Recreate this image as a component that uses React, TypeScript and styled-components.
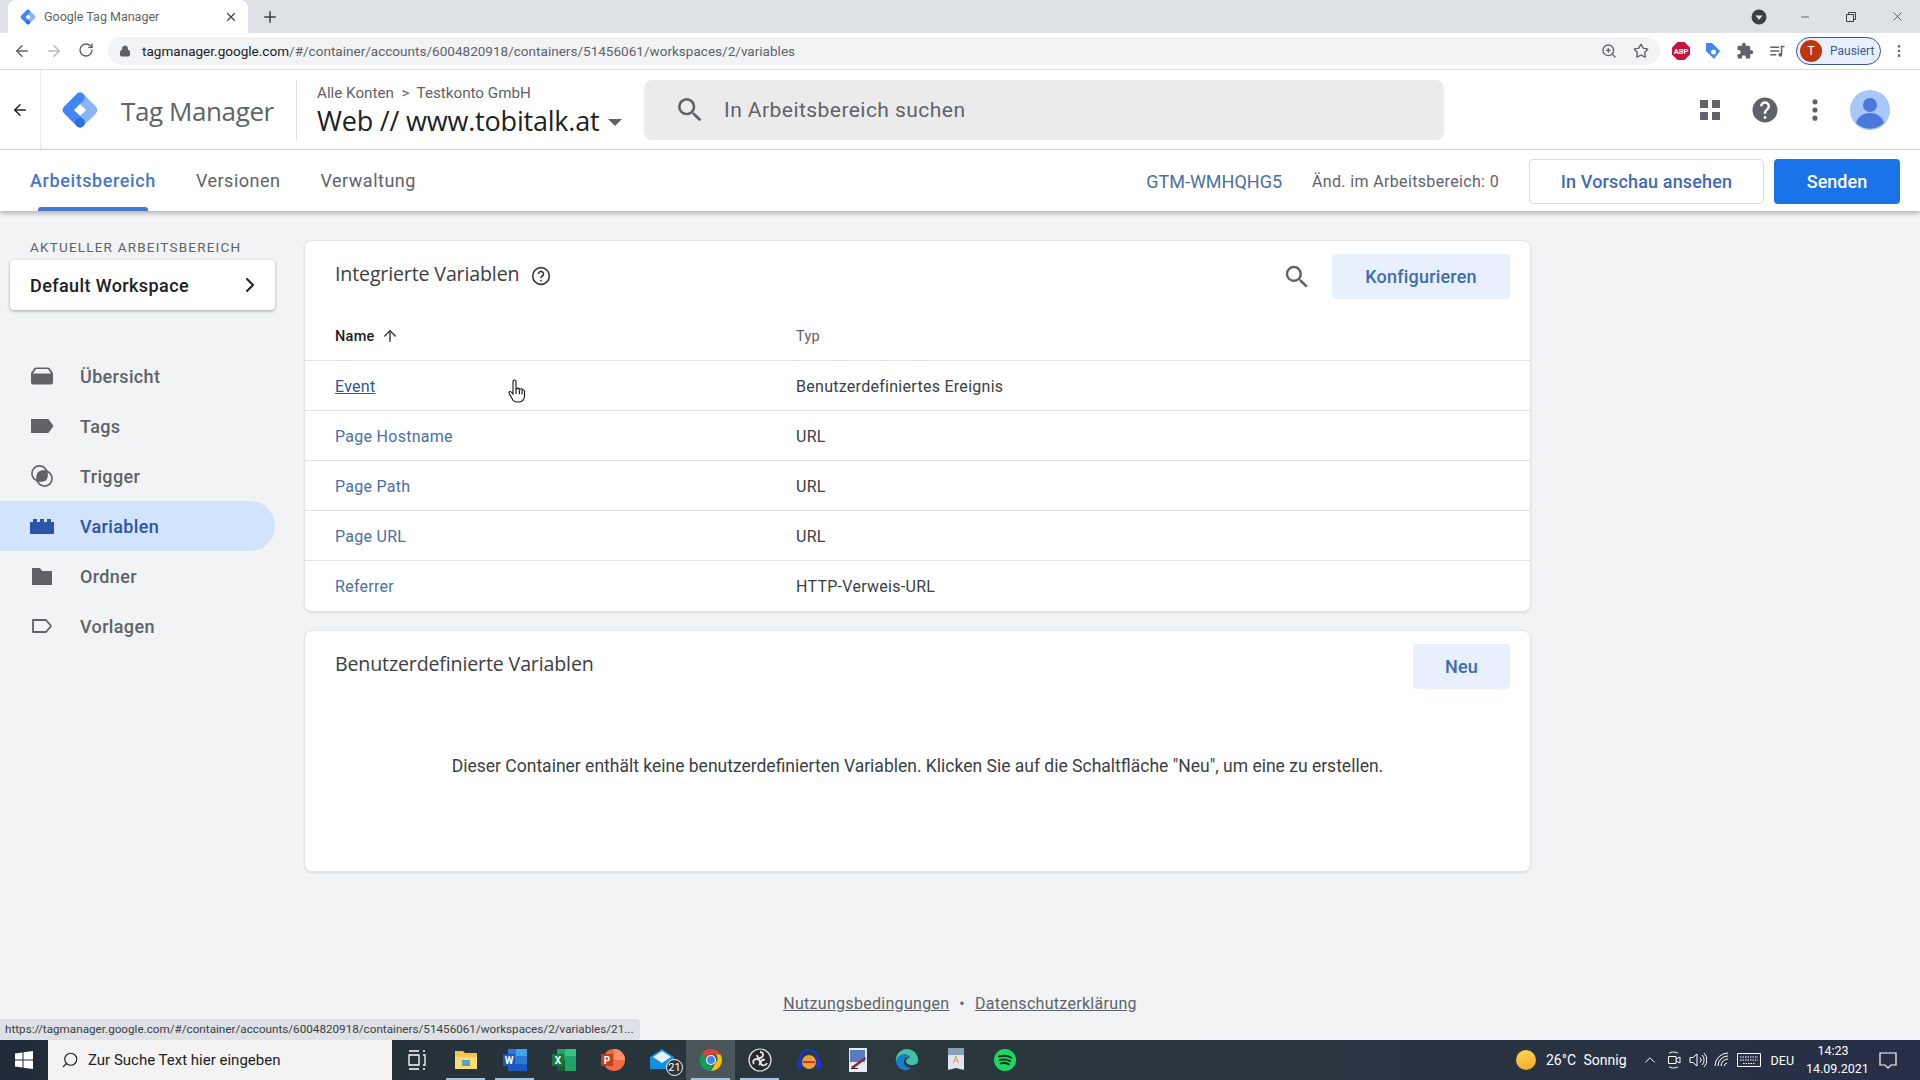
import { FC, ReactNode } from 'react'
import styled, { createGlobalStyle } from 'styled-components'
import { ArrowLeft, ArrowRight, ArrowUp, RotateCw, Search, Star, ZoomIn, Lock, Plus, X, Minus, ChevronRight, MoreVertical, ChevronUp } from 'lucide-react'

const GlobalStyle = createGlobalStyle`
    html, body {
        margin: 0;
        padding: 0;
        background: #f1f3f4;
    }
    body {
        font-family: Roboto, "Liberation Sans", sans-serif;
        color: #3c4043;
    }
    * {
        box-sizing: border-box;
    }
`

const Page = styled.div`
    position: relative;
    width: 1920px;
    height: 1080px;
    display: flex;
    flex-direction: column;
    overflow: hidden;
    background: #f1f3f4;
`

/* browser chrome */

const TabStrip = styled.div`
    height: 33px;
    flex: none;
    display: flex;
    align-items: flex-end;
    padding-left: 8px;
    background: #dee1e6;
`

const BrowserTab = styled.div`
    width: 240px;
    height: 33px;
    display: flex;
    align-items: center;
    padding: 0 10px 0 12px;
    background: #fff;
    border-radius: 8px 8px 0 0;
    font-size: 12.5px;
    color: #5f6368;
`

const TabTitle = styled.span`
    margin-left: 8px;
    flex: 1;
`

const NewTab = styled.div`
    width: 44px;
    height: 33px;
    display: flex;
    align-items: center;
    justify-content: center;
    color: #3c4043;
`

const WindowControls = styled.div`
    margin-left: auto;
    height: 33px;
    display: flex;
    align-items: center;
    color: #3c4043;
`

const WindowButton = styled.div<{ $w: number }>`
    width: ${p => p.$w}px;
    display: flex;
    justify-content: center;
`

const Toolbar = styled.div`
    height: 37px;
    flex: none;
    display: flex;
    align-items: center;
    background: #fff;
    border-bottom: 1px solid #dadce0;
    color: #5f6368;
`

const NavButton = styled.div<{ $faded?: boolean }>`
    width: 32px;
    display: flex;
    justify-content: center;
    color: ${p => (p.$faded ? '#b4b7bb' : '#5f6368')};
`

const NavButtons = styled.div`
    width: 108px;
    padding-left: 6px;
    display: flex;
    flex: none;
`

const MoreButton = styled(NavButton)`
    margin-left: 2px;
`

const Omnibox = styled.div`
    width: 1552px;
    height: 28px;
    flex: none;
    display: flex;
    align-items: center;
    padding: 0 11px;
    background: #f1f3f4;
    border-radius: 14px;
`

const UrlHost = styled.span`
    margin-left: 11px;
    font-size: 13.55px;
    color: #202124;
`

const UrlPath = styled.span`
    font-size: 13.55px;
    color: #5f6368;
`

const OmniIcons = styled.div`
    margin-left: auto;
    display: flex;
    gap: 16px;
    align-items: center;
`

const Extensions = styled.div`
    display: flex;
    align-items: center;
    gap: 14px;
    padding-left: 12px;
`

const ProfilePill = styled.div`
    width: 85px;
    height: 28px;
    margin-left: -4px;
    display: flex;
    align-items: center;
    gap: 8px;
    padding-left: 3px;
    background: #e8f0fe;
    border: 1px solid #3c5a8c;
    border-radius: 14px;
    font-size: 12px;
    color: #3c5a8c;
`

const ProfileDot = styled.div`
    width: 22px;
    height: 22px;
    display: flex;
    align-items: center;
    justify-content: center;
    border-radius: 50%;
    background: #bf360c;
    color: #fff;
    font-size: 12px;
`

/* GTM header */

const Header = styled.header`
    height: 80px;
    flex: none;
    display: flex;
    align-items: center;
    background: #fff;
    border-bottom: 1px solid #e0e0e0;
`

const BackCell = styled.div`
    width: 41px;
    height: 100%;
    display: flex;
    align-items: center;
    justify-content: center;
    border-right: 1px solid #e8eaed;
    color: #202124;
`

const Brand = styled.div`
    width: 256px;
    height: 60px;
    display: flex;
    align-items: center;
    padding-left: 20px;
    border-right: 1px solid #e0e0e0;
`

const BrandName = styled.span`
    margin: 2px 0 0 22px;
    font-family: "Open Sans", sans-serif;
    font-size: 26px;
    color: #5f6368;
    letter-spacing: -0.4px;
`

const Breadcrumbs = styled.div`
    width: 347px;
    padding: 3px 0 0 20px;
`

const Crumb = styled.div`
    font-size: 15.2px;
    color: #5f6368;
    line-height: 18px;
`

const ContainerName = styled.div`
    display: flex;
    align-items: center;
    margin-top: 1px;
    font-family: "Open Sans", sans-serif;
    font-size: 27px;
    line-height: 36px;
    color: #202124;
    letter-spacing: -0.2px;
`

const Caret = styled.span`
    width: 0;
    height: 0;
    margin: 4px 0 0 9px;
    border-left: 7px solid transparent;
    border-right: 7px solid transparent;
    border-top: 7px solid #5f6368;
`

const SearchBox = styled.div`
    width: 800px;
    height: 60px;
    flex: none;
    display: flex;
    align-items: center;
    gap: 18px;
    padding: 1px 0 0 30px;
    background: #ebebeb;
    border-radius: 8px;
    color: #5f6368;
    font-size: 21px;
    letter-spacing: 0.45px;
`

const HeaderIcons = styled.div`
    margin-left: auto;
    display: flex;
    align-items: center;
    padding-right: 18px;
    color: #5f6368;
`

const HeaderIcon = styled.div<{ $w: number }>`
    width: ${p => p.$w}px;
    display: flex;
    justify-content: center;
`

const TabsBar = styled.nav`
    position: relative;
    z-index: 2;
    height: 61px;
    flex: none;
    display: flex;
    align-items: center;
    background: #fff;
    box-shadow: 0 2px 5px rgba(60, 64, 67, 0.4);
`

const TabLink = styled.div<{ $active?: boolean }>`
    position: relative;
    height: 100%;
    display: flex;
    align-items: center;
    margin-right: 40px;
    font-size: 18px;
    letter-spacing: ${p => (p.$active ? 0.6 : 0.5)}px;
    font-weight: ${p => (p.$active ? 500 : 400)};
    color: ${p => (p.$active ? '#4a77c9' : '#5f6368')};

    &:first-child {
        margin-left: 30px;
    }

    ${p => p.$active && `
        &::after {
            content: '';
            position: absolute;
            left: 8px;
            right: 8px;
            bottom: 0;
            height: 4px;
            border-radius: 3px 3px 0 0;
            background: #4a77d4;
        }
    `}
`

const TabActions = styled.div`
    margin-left: auto;
    display: flex;
    align-items: center;
    padding: 2px 20px 0 0;
`

const ContainerId = styled.span`
    font-size: 18px;
    color: #4a6fa5;
    margin-right: 30px;
`

const Changes = styled.span`
    font-size: 16px;
    letter-spacing: 0.35px;
    color: #5f6368;
    margin-right: 30px;
`

const OutlineButton = styled.div`
    width: 235px;
    height: 45px;
    display: flex;
    align-items: center;
    justify-content: center;
    border: 1px solid #dadce0;
    border-radius: 4px;
    font-size: 18px;
    font-weight: 500;
    letter-spacing: 0.15px;
    color: #3f6cb0;
`

const PrimaryButton = styled.div`
    width: 126px;
    height: 45px;
    margin-left: 10px;
    display: flex;
    align-items: center;
    justify-content: center;
    border-radius: 4px;
    background: #1a73e8;
    font-size: 18px;
    font-weight: 500;
    color: #fff;
`

/* body */

const Body = styled.div`
    flex: 1;
    min-height: 0;
    display: flex;
`

const Sidebar = styled.aside`
    width: 304px;
    flex: none;
    padding-top: 28px;
`

const SidebarLabel = styled.div`
    padding-left: 30px;
    font-size: 13.5px;
    line-height: 16px;
    letter-spacing: 1.2px;
    color: #5f6368;
`

const WorkspaceCard = styled.div`
    width: 265px;
    height: 50px;
    margin: 5px 0 41px 10px;
    display: flex;
    align-items: center;
    justify-content: space-between;
    padding: 0 13px 0 20px;
    background: #fff;
    border-radius: 4px;
    box-shadow: 0 1px 3px rgba(60, 64, 67, 0.45);
    font-size: 18px;
    font-weight: 500;
    letter-spacing: 0.4px;
    color: #202124;
`

const NavItem = styled.div<{ $active?: boolean }>`
    width: 275px;
    height: 50px;
    display: flex;
    align-items: center;
    padding-left: 30px;
    border-radius: 0 25px 25px 0;
    background: ${p => (p.$active ? '#d2e3fc' : 'transparent')};
    color: ${p => (p.$active ? '#2a55a8' : '#5f6368')};
    font-size: 18px;
    font-weight: 500;
    letter-spacing: 0.35px;
`

const NavIcon = styled.div`
    width: 50px;
    display: flex;
    flex: none;
`

const Main = styled.main`
    flex: 1;
    display: flex;
    flex-direction: column;
    padding-top: 29px;
`

const Card = styled.section`
    width: 1227px;
    background: #fff;
    border: 1px solid #e3e5e8;
    border-radius: 8px;
    box-shadow: 0 1px 2px rgba(60, 64, 67, 0.12);
`

const CardHead = styled.div<{ $h: number }>`
    height: ${p => p.$h}px;
    display: flex;
    align-items: flex-start;
    padding: 13px 20px 0 30px;
`

const CardTitle = styled.h2`
    margin: 2px 0 0;
    font-family: "Open Sans", sans-serif;
    font-size: 19.6px;
    font-weight: 400;
    line-height: 36px;
    letter-spacing: -0.15px;
    color: #3c4043;
`

const HelpIcon = styled.div`
    display: flex;
    margin: 12px 0 0 12px;
    color: #3c4043;
`

const CardActions = styled.div`
    margin-left: auto;
    display: flex;
    align-items: center;
    gap: 20px;
    color: #5f6368;
`

const TintButton = styled.div<{ $w: number }>`
    width: ${p => p.$w}px;
    height: 45px;
    display: flex;
    align-items: center;
    justify-content: center;
    border-radius: 4px;
    background: #e8f0fe;
    font-size: 18px;
    font-weight: 500;
    letter-spacing: 0.2px;
    color: #3f6cb0;
`

const Row = styled.div<{ $head?: boolean }>`
    height: ${p => (p.$head ? 46 : 50)}px;
    display: grid;
    grid-template-columns: 461px 1fr;
    align-items: center;
    padding: ${p => (p.$head ? '0 0 3px 30px' : '1px 0 0 30px')};
    font-size: 16px;
    letter-spacing: 0.28px;
    border-bottom: 1px solid #e0e0e0;

    &:last-child {
        border-bottom: 0;
    }
`

const NameHead = styled.div`
    display: flex;
    align-items: center;
    gap: 6px;
    font-size: 14.5px;
    font-weight: 500;
    color: #202124;
`

const TypeHead = styled.div`
    font-size: 14.5px;
    color: #5f6368;
`

const VarLink = styled.a<{ $hover?: boolean }>`
    color: ${p => (p.$hover ? '#2f5597' : '#4a6fa5')};
    text-decoration: ${p => (p.$hover ? 'underline' : 'none')};
`

const VarType = styled.span`
    color: #3c4043;
`

const EmptyText = styled.p`
    margin: 49px 0 0;
    text-align: center;
    font-size: 17.5px;
    line-height: 24px;
    color: #3c4043;
`

const SecondCard = styled(Card)`
    height: 242px;
    margin-top: 18px;
`

const Footer = styled.footer`
    margin-top: auto;
    padding: 0 304px 27px 0;
    display: flex;
    justify-content: center;
    gap: 10px;
    font-size: 16px;
    letter-spacing: 0.3px;
    color: #5f6368;
`

const FootLink = styled.a`
    text-decoration: underline;
`

/* things lying over the page */

const StatusBubble = styled.div`
    position: absolute;
    left: 0;
    bottom: 40px;
    width: 640px;
    height: 21px;
    padding: 0 0 0 5px;
    background: #dee1e6;
    border-radius: 0 4px 0 0;
    font-size: 11.7px;
    line-height: 21px;
    color: #3c4043;
    white-space: nowrap;
`

const Cursor = styled.svg`
    position: absolute;
    left: 508px;
    top: 379px;
`

/* taskbar */

const Taskbar = styled.div`
    height: 40px;
    flex: none;
    display: flex;
    align-items: center;
    background: linear-gradient(90deg, #1f2c37, #2b383c 45%, #2a3540 70%, #262f47);
    color: #fff;
`

const StartButton = styled.div`
    width: 48px;
    display: flex;
    justify-content: center;
`

const TaskSearch = styled.div`
    width: 344px;
    height: 40px;
    display: flex;
    align-items: center;
    gap: 9px;
    padding-left: 13px;
    background: #f3f3f3;
    font-size: 15px;
    color: #222;
`

const TaskGlass = styled(Search)`
    transform: scaleX(-1);
`

const TaskViewCell = styled.div`
    width: 49px;
    display: flex;
    justify-content: center;
`

const TaskApp = styled.div<{ $open?: boolean; $active?: boolean }>`
    position: relative;
    width: 49px;
    height: 40px;
    display: flex;
    align-items: center;
    justify-content: center;
    background: ${p => (p.$active ? '#4a5659' : 'transparent')};

    ${p => p.$open && `
        &::after {
            content: '';
            position: absolute;
            left: 5px;
            right: 5px;
            bottom: 0;
            height: 2px;
            background: #a6c4dc;
        }
    `}
`

const MailBadge = styled.span`
    position: absolute;
    right: 3px;
    bottom: 4px;
    width: 17px;
    height: 17px;
    display: flex;
    align-items: center;
    justify-content: center;
    border: 1px solid #fff;
    border-radius: 50%;
    background: #28343a;
    font-size: 11px;
`

const Tray = styled.div`
    margin-left: auto;
    display: flex;
    align-items: center;
    height: 40px;
    font-size: 14px;
`

const Sun = styled.div`
    width: 20px;
    height: 20px;
    margin-right: 10px;
    border-radius: 50%;
    background: linear-gradient(160deg, #ffd75a, #f5a623);
`

const Weather = styled.span`
    font-size: 14px;
    word-spacing: 4px;
    margin-right: 11px;
`

const TrayIcon = styled.div<{ $w: number }>`
    width: ${p => p.$w}px;
    display: flex;
    justify-content: center;
`

const Lang = styled.span`
    font-size: 12.5px;
    margin: 0 12px 0 8px;
`

const Clock = styled.div`
    width: 54px;
    font-size: 12.5px;
    line-height: 18px;
    text-align: center;
    white-space: nowrap;
`

const NotifyCell = styled.div`
    width: 60px;
    padding-right: 4px;
    display: flex;
    justify-content: center;
`

/* drawings */

const GtmLogo: FC<{ size: number }> = ({ size }) => (
    <svg width={size} height={size} viewBox="0 0 36 36" fill="none" strokeWidth="9" strokeLinejoin="round" strokeLinecap="round">
        <path d="M18 6 30 18 18 30" stroke="#8ab4f8" />
        <path d="M18 6 6 18 18 30" stroke="#4285f4" />
        <circle cx="18" cy="30" r="4.500" fill="#2a6fdb" stroke="none" />
    </svg>
)

const Icon: FC<{ children: ReactNode; size?: number; color?: string }> = ({ children, size = 24, color = 'currentColor' }) => (
    <svg width={size} height={size} viewBox="0 0 24 24" fill={color}>{children}</svg>
)

// the material search glass, lucide's one is too thin here
const MaterialSearch: FC<{ size: number }> = ({ size }) => (
    <Icon size={size}>
        <path d="M15.500 14h-.790l-.280-.270A6.470 6.470 0 0 0 16 9.500 6.500 6.500 0 1 0 9.500 16c1.610 0 3.090-.590 4.230-1.570l.270.280v.790l5 4.990L20.490 19l-4.990-5zm-6 0C7.010 14 5 11.990 5 9.500S7.010 5 9.500 5 14 7.010 14 9.500 11.990 14 9.500 14z" />
    </Icon>
)

const navItems: { label: string; active?: boolean; icon: ReactNode }[] = [
    {
        label: 'Übersicht',
        icon: (
            <Icon>
                <path d="M6 3.500h12a2 2 0 0 1 1.600.8L23 9v9.500a2 2 0 0 1-2 2H3a2 2 0 0 1-2-2V9l3.400-4.700A2 2 0 0 1 6 3.500Z" />
                <path d="M6 5h12l3 4.500H3Z" fill="#f1f3f4" />
            </Icon>
        )
    },
    {
        label: 'Tags',
        icon: <Icon><path d="M1 5h17a1 1 0 0 1 .8.4L23.500 12l-4.700 6.600a1 1 0 0 1-.8.400H1Z" /></Icon>
    },
    {
        label: 'Trigger',
        icon: (
            <Icon>
                <circle cx="9.500" cy="9.500" r="7.600" fill="none" stroke="currentColor" strokeWidth="1.600" />
                <circle cx="14.500" cy="14.500" r="7.600" fill="none" stroke="currentColor" strokeWidth="1.600" />
                <path d="M8 8a7.600 7.600 0 0 1 9 1 7.600 7.600 0 0 1-1 7.500 7.600 7.600 0 0 1-8.500-1A7.600 7.600 0 0 1 8 8Z" />
            </Icon>
        )
    },
    {
        label: 'Variablen',
        active: true,
        icon: <Icon><path d="M0 8h3V5h4v3h3V5h4v3h3V5h4v3h3v12H0Z" /></Icon>
    },
    {
        label: 'Ordner',
        icon: <Icon><path d="M2 4h8l2 3h10v14H2Z" /></Icon>
    },
    {
        label: 'Vorlagen',
        icon: <Icon><path d="M3 6h13l5 6-5 6H3Z" fill="none" stroke="currentColor" strokeWidth="1.800" strokeLinejoin="round" /></Icon>
    }
]

const variables = [
    { name: 'Event', type: 'Benutzerdefiniertes Ereignis', hover: true },
    { name: 'Page Hostname', type: 'URL' },
    { name: 'Page Path', type: 'URL' },
    { name: 'Page URL', type: 'URL' },
    { name: 'Referrer', type: 'HTTP-Verweis-URL' }
]

const App: FC = () => (
    <Page>
        <GlobalStyle />

        <TabStrip>
            <BrowserTab>
                <GtmLogo size={16} />
                <TabTitle>Google Tag Manager</TabTitle>
                <X size={14} color="#3c4043" />
            </BrowserTab>
            <NewTab><Plus size={18} /></NewTab>
            <WindowControls>
                <WindowButton $w={46}>
                    <svg width="16" height="16" viewBox="0 0 16 16">
                        <circle cx="8" cy="8" r="7.500" fill="#3c4043" />
                        <path d="M4.500 6.500h7L8 11Z" fill="#dee1e6" />
                    </svg>
                </WindowButton>
                <WindowButton $w={46}><Minus size={12} strokeWidth={1.5} /></WindowButton>
                <WindowButton $w={46}>
                    <svg width="12" height="12" viewBox="0 0 12 12" fill="none" stroke="#3c4043">
                        <path d="M1.500 3.500h7v7h-7ZM3.500 3.500v-2h7v7h-2" />
                    </svg>
                </WindowButton>
                <WindowButton $w={46}><X size={15} strokeWidth={1.3} /></WindowButton>
            </WindowControls>
        </TabStrip>

        <Toolbar>
            <NavButtons>
                <NavButton><ArrowLeft size={18} /></NavButton>
                <NavButton $faded><ArrowRight size={18} /></NavButton>
                <NavButton><RotateCw size={16} /></NavButton>
            </NavButtons>
            <Omnibox>
                <Lock size={12} fill="#5f6368" />
                <UrlHost>tagmanager.google.com</UrlHost>
                <UrlPath>/#/container/accounts/6004820918/containers/51456061/workspaces/2/variables</UrlPath>
                <OmniIcons>
                    <ZoomIn size={16} />
                    <Star size={16} />
                </OmniIcons>
            </Omnibox>
            <Extensions>
                <svg width="18" height="18" viewBox="0 0 18 18">
                    <path d="M5.500 0h7L18 5.500v7L12.500 18h-7L0 12.500v-7Z" fill="#c8143f" />
                    <text x="9" y="12" fontSize="7.500" fontWeight="700" fontFamily="Roboto" textAnchor="middle" fill="#fff">ABP</text>
                </svg>
                <svg width="18" height="18" viewBox="0 0 18 18">
                    <path d="M2 1h6l8 8-6 8-8-8Z" fill="#4285f4" />
                    <circle cx="9.500" cy="10" r="2.500" fill="#fff" />
                </svg>
                <Icon size={18}>
                    <path d="M20.500 11H19V7a2 2 0 0 0-2-2h-4V3.500a2.500 2.500 0 0 0-5 0V5H4a2 2 0 0 0-2 2v3.800h1.500a2.700 2.700 0 0 1 0 5.400H2V20a2 2 0 0 0 2 2h3.800v-1.500a2.700 2.700 0 0 1 5.400 0V22H17a2 2 0 0 0 2-2v-4h1.500a2.500 2.500 0 0 0 0-5Z" />
                </Icon>
                <Icon size={18}>
                    <path d="M3 6h12v2H3Zm0 5h12v2H3Zm0 5h8v2H3Z" />
                    <path d="M17 5h5v2h-3v10a2.500 2.500 0 1 1-2-2.400Z" />
                </Icon>
                <ProfilePill>
                    <ProfileDot>T</ProfileDot>
                    Pausiert
                </ProfilePill>
            </Extensions>
            <MoreButton><MoreVertical size={16} /></MoreButton>
        </Toolbar>

        <Header>
            <BackCell><ArrowLeft size={18} /></BackCell>
            <Brand>
                <GtmLogo size={38} />
                <BrandName>Tag Manager</BrandName>
            </Brand>
            <Breadcrumbs>
                <Crumb>Alle Konten &nbsp;&gt;&nbsp; Testkonto GmbH</Crumb>
                <ContainerName>Web // www.tobitalk.at<Caret /></ContainerName>
            </Breadcrumbs>
            <SearchBox>
                <MaterialSearch size={32} />
                In Arbeitsbereich suchen
            </SearchBox>
            <HeaderIcons>
                <HeaderIcon $w={55}>
                    <Icon size={24}><path d="M2 2h8v8H2Zm12 0h8v8h-8ZM2 14h8v8H2Zm12 0h8v8h-8Z" /></Icon>
                </HeaderIcon>
                <HeaderIcon $w={55}>
                    <Icon size={30}>
                        <path d="M12 2a10 10 0 1 0 0 20 10 10 0 0 0 0-20Zm1 17h-2v-2h2Zm2.100-7.700-.9.900c-.7.700-1.200 1.300-1.200 2.800h-2v-.5c0-1.100.5-2.100 1.200-2.800l1.200-1.300c.4-.3.600-.800.600-1.400a2 2 0 0 0-4 0H8a4 4 0 0 1 8 0c0 .9-.4 1.700-.9 2.300Z" />
                    </Icon>
                </HeaderIcon>
                <HeaderIcon $w={45}>
                    <Icon size={28}><circle cx="12" cy="5" r="2.200" /><circle cx="12" cy="12" r="2.200" /><circle cx="12" cy="19" r="2.200" /></Icon>
                </HeaderIcon>
                <HeaderIcon $w={65}>
                    <svg width="40" height="40" viewBox="0 0 40 40">
                        <circle cx="20" cy="20" r="20" fill="#a8c7fa" />
                        <circle cx="20" cy="15" r="7" fill="#4a78dc" />
                        <path d="M6 33c2-7 8-10 14-10s12 3 14 10a20 20 0 0 1-28 0Z" fill="#4a78dc" />
                    </svg>
                </HeaderIcon>
            </HeaderIcons>
        </Header>

        <TabsBar>
            <TabLink $active>Arbeitsbereich</TabLink>
            <TabLink>Versionen</TabLink>
            <TabLink>Verwaltung</TabLink>
            <TabActions>
                <ContainerId>GTM-WMHQHG5</ContainerId>
                <Changes>Änd. im Arbeitsbereich: 0</Changes>
                <OutlineButton>In Vorschau ansehen</OutlineButton>
                <PrimaryButton>Senden</PrimaryButton>
            </TabActions>
        </TabsBar>

        <Body>
            <Sidebar>
                <SidebarLabel>AKTUELLER ARBEITSBEREICH</SidebarLabel>
                <WorkspaceCard>
                    Default Workspace
                    <ChevronRight size={24} color="#202124" />
                </WorkspaceCard>
                {navItems.map(item => (
                    <NavItem key={item.label} $active={item.active}>
                        <NavIcon>{item.icon}</NavIcon>
                        {item.label}
                    </NavItem>
                ))}
            </Sidebar>

            <Main>
                <Card>
                    <CardHead $h={74}>
                        <CardTitle>Integrierte Variablen</CardTitle>
                        <HelpIcon>
                            <svg width="20" height="20" viewBox="0 0 24 24" fill="none" stroke="currentColor" strokeWidth="2">
                                <circle cx="12" cy="12" r="10" />
                                <path d="M9 9.500a3 3 0 1 1 4.500 2.600c-1 .6-1.500 1.100-1.500 2.400M12 16.500v2" />
                            </svg>
                        </HelpIcon>
                        <CardActions>
                            <MaterialSearch size={30} />
                            <TintButton $w={178}>Konfigurieren</TintButton>
                        </CardActions>
                    </CardHead>
                    <Row $head>
                        <NameHead>Name <ArrowUp size={18} color="#3c4043" /></NameHead>
                        <TypeHead>Typ</TypeHead>
                    </Row>
                    {variables.map(v => (
                        <Row key={v.name}>
                            <div><VarLink $hover={v.hover}>{v.name}</VarLink></div>
                            <VarType>{v.type}</VarType>
                        </Row>
                    ))}
                </Card>

                <SecondCard>
                    <CardHead $h={74}>
                        <CardTitle>Benutzerdefinierte Variablen</CardTitle>
                        <CardActions>
                            <TintButton $w={97}>Neu</TintButton>
                        </CardActions>
                    </CardHead>
                    <EmptyText>Dieser Container enthält keine benutzerdefinierten Variablen. Klicken Sie auf die Schaltfläche "Neu", um eine zu erstellen.</EmptyText>
                </SecondCard>

                <Footer>
                    <FootLink>Nutzungsbedingungen</FootLink>
                    <span>•</span>
                    <FootLink>Datenschutzerklärung</FootLink>
                </Footer>
            </Main>
        </Body>

        <Taskbar>
            <StartButton>
                <svg width="18" height="18" viewBox="0 0 18 18" fill="#fff">
                    <path d="M0 2.500 7.500 1.400V8.500H0ZM8.500 1.300 18 0V8.500H8.500ZM0 9.500H7.500V16.600L0 15.500ZM8.500 9.500H18V18L8.500 16.700Z" />
                </svg>
            </StartButton>
            <TaskSearch>
                <TaskGlass size={18} strokeWidth={1.5} />
                Zur Suche Text hier eingeben
            </TaskSearch>
            <TaskViewCell>
                <svg width="18" height="20" viewBox="0 0 18 20" fill="none" stroke="#fff" strokeWidth="1.300">
                    <path d="M1 1h10M1 19h10M1 5h10v10H1ZM15 1h2M15 5h2v10h-2M15 19h2" />
                </svg>
            </TaskViewCell>
            <TaskApp $open>
                <svg width="24" height="22" viewBox="0 0 24 22">
                    <path d="M1 2h8l2 2h12v16H1Z" fill="#f3c64f" />
                    <path d="M1 8h22v12H1Z" fill="#fbdc74" />
                    <path d="M8 11h8v6H8Z" fill="#5a9fc9" />
                </svg>
            </TaskApp>
            <TaskApp $open>
                <svg width="26" height="24" viewBox="0 0 26 24">
                    <path d="M6 1h19v22H6Z" fill="#2b7cd3" />
                    <path d="M14 1h11v7H14Z" fill="#41a5ee" />
                    <path d="M6 16h19v7H6Z" fill="#185abd" />
                    <path d="M1 6h12v12H1Z" fill="#185abd" />
                    <text x="7" y="15.500" fontSize="10" fontWeight="700" fontFamily="Roboto" textAnchor="middle" fill="#fff">W</text>
                </svg>
            </TaskApp>
            <TaskApp>
                <svg width="26" height="24" viewBox="0 0 26 24">
                    <path d="M6 1h19v22H6Z" fill="#21a366" />
                    <path d="M14 1h11v7H14Z" fill="#33c481" />
                    <path d="M6 12h8v11H6Z" fill="#185c37" />
                    <path d="M1 6h12v12H1Z" fill="#107c41" />
                    <text x="7" y="15.500" fontSize="10" fontWeight="700" fontFamily="Roboto" textAnchor="middle" fill="#fff">X</text>
                </svg>
            </TaskApp>
            <TaskApp>
                <svg width="26" height="24" viewBox="0 0 26 24">
                    <circle cx="14" cy="12" r="11" fill="#ed6c47" />
                    <path d="M14 1a11 11 0 0 1 11 11H14Z" fill="#ff8f6b" />
                    <path d="M1 6h12v12H1Z" fill="#c43e1c" />
                    <text x="7" y="15.500" fontSize="10" fontWeight="700" fontFamily="Roboto" textAnchor="middle" fill="#fff">P</text>
                </svg>
            </TaskApp>
            <TaskApp>
                <svg width="26" height="24" viewBox="0 0 26 24">
                    <path d="M1 9 13 1l12 8v12H1Z" fill="#1490df" />
                    <path d="M4 9 13 3l9 6-9 6Z" fill="#e6f3fb" />
                </svg>
                <MailBadge>21</MailBadge>
            </TaskApp>
            <TaskApp $open $active>
                <svg width="24" height="24" viewBox="0 0 24 24">
                    <path d="M12 1a11 11 0 0 1 9.500 5.500H12a5.500 5.500 0 0 0-5.200 3.700L3.200 5A11 11 0 0 1 12 1Z" fill="#db4437" />
                    <path d="M21.500 6.500A11 11 0 0 1 12 23l4.700-8.200a5.500 5.500 0 0 0 0-8.300Z" fill="#f4c20d" />
                    <path d="M12 23A11 11 0 0 1 3.200 5l4.600 8a5.500 5.500 0 0 0 6 3.200Z" fill="#0f9d58" />
                    <circle cx="12" cy="12" r="4.500" fill="#4285f4" stroke="#fff" strokeWidth="1.200" />
                </svg>
            </TaskApp>
            <TaskApp $open>
                <svg width="24" height="24" viewBox="0 0 24 24">
                    <circle cx="12" cy="12" r="11" fill="#2a2a2e" stroke="#e6e6e6" strokeWidth="1.200" />
                    <path d="M12 4c3 0 4 3 2 5s-5 1-5-2M19 15c-1 3-5 3-6 1s1-5 4-4M6 16c-2-3 0-5 3-5s4 4 2 6" fill="none" stroke="#e6e6e6" strokeWidth="1.800" />
                </svg>
            </TaskApp>
            <TaskApp>
                <svg width="26" height="24" viewBox="0 0 26 24">
                    <path d="M4 15V11a9 9 0 0 1 18 0v4" fill="none" stroke="#1f33c9" strokeWidth="2.500" />
                    <rect x="1" y="12" width="5" height="9" rx="2" fill="#1f33c9" />
                    <rect x="20" y="12" width="5" height="9" rx="2" fill="#1f33c9" />
                    <circle cx="13" cy="14" r="7" fill="#e9a23b" />
                    <path d="M7 13h12v2H7Z" fill="#d9342b" />
                </svg>
            </TaskApp>
            <TaskApp>
                <svg width="20" height="24" viewBox="0 0 20 24">
                    <path d="M1 0h18v24H1Z" fill="#e8ebf2" />
                    <path d="M2 2h15v12H2Z" fill="#5c7ac0" />
                    <path d="M3 19 17 9l1 2L5 21Z" fill="#8b2a3b" />
                    <path d="M3 20h7v1H3Z" fill="#222" />
                </svg>
            </TaskApp>
            <TaskApp>
                <svg width="24" height="24" viewBox="0 0 24 24">
                    <path d="M12 1a11 11 0 0 1 11 12c0 3-3 4-6 4-4 0-6-2-6-4s2-3 4-3c-1-3-4-4-7-3-3 1-6 4-7 7a11 11 0 0 1 11-13Z" fill="#45c1a6" />
                    <path d="M1 13c1-4 5-7 8-7 3 0 5 2 5 4-3-1-5 1-5 4s3 6 7 6c-2 2-5 3-7 2-5-1-8-5-8-9Z" fill="#1a7cc9" />
                </svg>
            </TaskApp>
            <TaskApp>
                <svg width="18" height="24" viewBox="0 0 18 24">
                    <path d="M1 0h16v22l-8-2-8 2Z" fill="#dfe5ea" />
                    <path d="M1 0h16v7H1Z" fill="#8aa0b4" />
                    <text x="9" y="15" fontSize="9" fontFamily="Roboto" textAnchor="middle" fill="#d9883b">A</text>
                </svg>
            </TaskApp>
            <TaskApp>
                <svg width="24" height="24" viewBox="0 0 24 24">
                    <circle cx="12" cy="12" r="11" fill="#1ed760" />
                    <path d="M6 8.500c4-1 9-.8 12.500 1.200M6.800 12c3.400-.8 7.500-.6 10.400 1.100M7.600 15.400c2.800-.6 6-.4 8.400.9" fill="none" stroke="#14301e" strokeWidth="1.900" strokeLinecap="round" />
                </svg>
            </TaskApp>
            <Tray>
                <Sun />
                <Weather>26°C Sonnig</Weather>
                <TrayIcon $w={24}><ChevronUp size={18} strokeWidth={1.3} /></TrayIcon>
                <TrayIcon $w={24}>
                    <svg width="14" height="18" viewBox="0 0 14 18" fill="none" stroke="#fff">
                        <path d="M2 2.500c2-2 7-2 9 0M2 15.500c2 2 7 2 9 0M1.500 5.500h7.500v7H1.500ZM9 8l4-2v6l-4-2" />
                    </svg>
                </TrayIcon>
                <TrayIcon $w={24}>
                    <svg width="18" height="16" viewBox="0 0 18 16" fill="none" stroke="#fff">
                        <path d="M1 5.500h3l4-3.500v12l-4-3.500H1ZM11 5.500a3.500 3.500 0 0 1 0 5M13 3a7 7 0 0 1 0 10M15 1a10 10 0 0 1 0 14" />
                    </svg>
                </TrayIcon>
                <TrayIcon $w={25}>
                    <svg width="16" height="16" viewBox="0 0 16 16" fill="none" stroke="#fff">
                        <path d="M1 14A13 13 0 0 1 14 1M4 14A10 10 0 0 1 14 4M7 14a7 7 0 0 1 7-7M10 14a4 4 0 0 1 3-3" />
                    </svg>
                </TrayIcon>
                <TrayIcon $w={28}>
                    <svg width="24" height="14" viewBox="0 0 24 14" fill="none" stroke="#fff">
                        <path d="M.5.500h23v13H.5Z" />
                        <path d="M3 4h18M3 7h18M6 10.500h12" strokeDasharray="1.500 1" />
                    </svg>
                </TrayIcon>
                <Lang>DEU</Lang>
                <Clock>14:23<br />14.09.2021</Clock>
                <NotifyCell>
                    <svg width="18" height="18" viewBox="0 0 18 18" fill="none" stroke="#fff" strokeWidth="1.200">
                        <path d="M1 2h16v12h-5l-3 3-3-3H1Z" />
                    </svg>
                </NotifyCell>
            </Tray>
        </Taskbar>

        <StatusBubble>https://tagmanager.google.com/#/container/accounts/6004820918/containers/51456061/workspaces/2/variables/21...</StatusBubble>

        <Cursor width="18" height="24" viewBox="0 0 18 24" fill="#fff" stroke="#111" strokeWidth="1.100">
            <path d="M5 2.500a1.500 1.500 0 0 1 3 0V10l1-.3a1.400 1.400 0 0 1 2.400.3l1 .2a1.400 1.400 0 0 1 2.300.6c1.200 0 1.800.7 1.800 1.800V17c0 3-2 6-5.500 6H9c-2.500 0-4-1.500-5-3.500L1.200 14.500c-.8-1.500 1.100-2.600 2-1.500L5 15Z" />
            <path d="M8 10v5M11.300 10.300v5M14 11v4.500" fill="none" />
        </Cursor>
    </Page>
)

export default App
